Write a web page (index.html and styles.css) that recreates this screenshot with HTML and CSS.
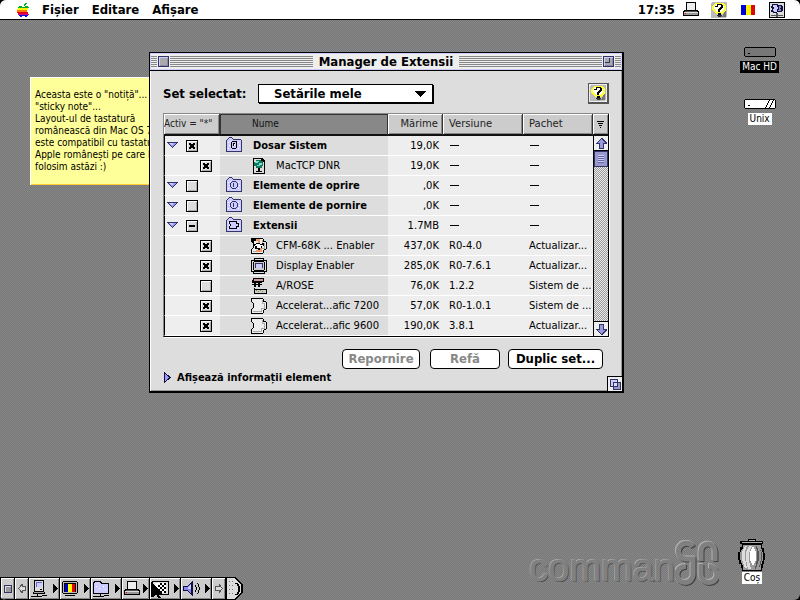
FILE: index.html
```html
<!DOCTYPE html>
<html lang="ro">
<head>
<meta charset="utf-8">
<title>Manager de Extensii</title>
<link rel="stylesheet" href="styles.css">
</head>
<body>
<svg class="defs" aria-hidden="true">
  <symbol id="fold" viewBox="0 0 16 15"><path d="M1 14V3L3 1H6L8 3H15V14Z" fill="#ccf"/><path d="M2 5h1v1h-1zM4 4h1v1h-1zM3 8h1v1h-1zM2 11h1v1h-1zM12 5h1v1h-1zM13 8h1v1h-1zM12 11h1v1h-1z" fill="#fff"/><path d="M0 3h1v11h-1zM1 2h1v1h-1zM2 1h1v1h-1zM3 0h3v1h-3zM6 1h1v1h-1zM7 2h8v1h-8zM15 3h1v11h-1zM0 14h16v1h-16z" fill="#336"/></symbol>
  <symbol id="tri" viewBox="0 0 11 7"><path d="M0 0H11L6 6H5Z" fill="#336"/><path d="M2 1H9L5.500 5Z" fill="#99f"/><path d="M2 1H6V3H4Z" fill="#ccf"/></symbol>
  <symbol id="piece" viewBox="0 0 16 16"><path d="M1 0H12V3H14V5H15V10H14V12H12V15H1V11H2V9H3V6H2V4H1Z" fill="#eee"/><path d="M0 0h12v1h-12zM0 1h1v3h-1zM1 4h1v1h-1zM2 5h1v5h-1zM1 10h1v1h-1zM0 11h1v5h-1zM1 15h11v1h-11zM12 1h1v3h-1zM13 3h2v1h-2zM15 4h1v7h-1zM13 11h2v1h-2zM12 12h1v3h-1z"/><path d="M11 2h1v3h2v6h-3v3h-9v-1h8v-3h3v-4h-2z" fill="#aaa"/></symbol>
  <symbol id="go" viewBox="0 0 5 9"><path d="M0 0H1V1H2V2H3V3H4V4H5V5H4V6H3V7H2V8H1V9H0Z"/></symbol>
  <symbol id="help" viewBox="0 0 16 16"><rect width="16" height="16" rx="2" fill="#bbb"/><path d="M1 15H15V1L12 14Z" fill="#777"/><path d="M4 1H12L15 4V8L11 12H5L1 8V4Z" fill="#ff3"/><path d="M5 2H11L13 5V7L10 10H6L3 7V4Z" fill="#fff"/><path d="M4 4h2v-2h5v1h1v3h-1v1h-1v1h-1v2h-2v-3h1v-1h1v-1h1v-2h-3v2h-3zM7 11h3v2h-3z"/><path d="M6 13h5v1h-1v1h-3v-1h-1z" fill="#333"/></symbol>
  <symbol id="printer" viewBox="0 0 16 15"><path d="M3 0H13V8H15V9H16V14H0V9H1V8H3Z"/><path d="M4 1H12V8H4Z" fill="#eee"/><path d="M2 9H14V10H2Z" fill="#555"/><path d="M1 10H15V11H1Z" fill="#ddd"/><path d="M1 11H15V13H1Z" fill="#999"/><path d="M2 11h1v1h-1z" fill="#f00"/></symbol>
  <symbol id="flag" viewBox="0 0 14 10"><path d="M0 0H5V10H0Z" fill="#0000d4"/><path d="M5 0H10V10H5Z" fill="#fcf305"/><path d="M10 0H14V10H10Z" fill="#dd0806"/></symbol>
  <symbol id="arrow" viewBox="0 0 11 11"><path d="M5 0H6L11 5V6H8V11H3V6H0V5Z" fill="#336"/><path d="M5 1H6L9 5H7V10H4V5H2Z" fill="#99d"/></symbol>
  <symbol id="hollow" viewBox="0 0 8 9"><path d="M4 0.500V2.500H7.500V6.500H4V8.500L0.500 4.500Z" fill="#ddd" stroke="#555"/></symbol>
</svg>

<header class="menubar">
  <nav class="menus">
    <button class="apple" aria-label="Apple"><svg width="12" height="14" viewBox="0 0 12 14"><path d="M6 3h1v-2h1v-1h2v1h-1v1h-1v1h-2zM2 3h3v1h3v-1h3v1h1v1H1v-1h1z" fill="#00b020"/><path d="M1 5H11V7H0V6H1Z" fill="#fcf305"/><path d="M0 7H10V9H0Z" fill="#ff7a00"/><path d="M0 9H11V11H1V10H0Z" fill="#e00020"/><path d="M1 11H12V12H11V13H2V12H1Z" fill="#d0108a"/><path d="M2 12H11V13H10V14H8V13H5V14H3V13H2Z" fill="#1010e0"/></svg></button>
    <button>Fișier</button><button>Editare</button><button>Afișare</button>
  </nav>
  <div class="status">
    <span>17:35</span>
    <svg class="printer" width="16" height="15"><use href="#printer"/></svg>
    <svg class="help" width="16" height="16"><use href="#help"/></svg>
    <svg class="flag" width="14" height="10"><use href="#flag"/></svg>
    <svg width="16" height="16" viewBox="0 0 16 16"><path d="M0 0H16V16H0Z"/><path d="M1 1H15V15H1Z" fill="#ddd"/><path d="M3 2H9V3H13V4H14V9H13V10H8V11H4V10H2V8H3V6H2V4H3Z" fill="#114"/><path d="M4 3H8V5H9V7H8V10H5V9H4V7H5V5H4Z" fill="#ccf"/><path d="M10 4H12V6H11V7H12V9H9V8H10Z" fill="#88c"/><path d="M2 13H7V11H9V13H14V14H9V15H7V14H2Z" fill="#555"/></svg>
  </div>
</header>

<main class="desktop">
  <div class="note">Aceasta este o "notiță"...<br>"sticky note"...<br>Layout-ul de tastatură<br>românească din Mac OS 7<br>este compatibil cu tastatu<br>Apple românești pe care l<br>folosim astăzi :)</div>

  <div class="drives">
    <figure class="drive selected"><svg width="32" height="10" viewBox="0 0 32 10"><path d="M1 0H31V1H32V9H31V10H1V9H0V1H1Z"/><path d="M1 1H31V9H1Z" fill="#777"/><path d="M4 6h2v1h-2z"/></svg><figcaption>Mac HD</figcaption></figure>
    <figure class="drive"><svg width="32" height="10" viewBox="0 0 32 10"><path d="M1 0H31V1H32V9H31V10H1V9H0V1H1Z"/><path d="M1 1H31V9H1Z" fill="#fff"/><path d="M4 6h2v1h-2zM21 8h1v-2h1v-2h1v-2h1v-1h1v1h-1v2h-1v2h-1v2h-1v1h-1zM25 8h1v-2h1v-2h1v-2h1v-1h1v1h-1v2h-1v2h-1v2h-1v1h-1z"/></svg><figcaption>Unix</figcaption></figure>
  </div>

  <section class="window" aria-label="Manager de Extensii">
    <header class="titlebar">
      <i class="stripes edge"></i><button class="box" aria-label="Închide"></button><i class="stripes"></i>
      <h1>Manager de Extensii</h1>
      <i class="stripes"></i><button class="box zoom" aria-label="Mărește"></button><i class="stripes edge"></i>
    </header>
    <div class="content">
      <div class="setrow">
        <label for="set">Set selectat:</label>
        <div class="pick"><select id="set"><option>Setările mele</option></select><svg width="12" height="6" viewBox="0 0 12 6"><path d="M0 0H12L6 6Z"/></svg></div>
        <button class="helpbtn" aria-label="Ajutor"><svg width="16" height="16"><use href="#help"/></svg></button>
      </div>
      <div class="list">
        <table>
          <colgroup><col class="c1"><col><col class="c3"><col class="c4"><col class="c5"></colgroup>
          <thead><tr><th class="on">Activ = "*"</th><th class="name sorted">Nume</th><th class="size">Mărime</th><th>Versiune</th><th>Pachet</th></tr></thead>
          <tbody>
            <tr class="group"><td><div class="cell"><svg width="11" height="7"><use href="#tri"/></svg><input type="checkbox" checked aria-label="Dosar Sistem"></div></td><td><div class="cell"><svg class="fold" width="17" height="15" viewBox="0 0 17 15"><use href="#fold" width="16" height="15"/><path d="M6 4h5v1h-5zM5 5h1v6h-1zM6 11h4v1h-4zM10 5h1v6h-1zM7 6h2v3h-2z"/><path d="M8 7h1v2h-1z" fill="#fff"/></svg>Dosar Sistem</div></td><td>19,0K</td><td class="dash"><i></i></td><td class="dash"><i></i></td></tr>
            <tr><td><div class="cell"><input type="checkbox" checked aria-label="MacTCP DNR"></div></td><td><div class="cell"><svg width="16" height="16" viewBox="0 0 16 16"><path d="M2 0H11L14 3V16H2Z"/><path d="M3 1H10V4H13V15H3Z" fill="#ddd"/><path d="M5 2H10V3H12V8H11V10H5V8H3V4H5Z" fill="#175"/><path d="M5 3H8V4H7V5H4V4H5ZM8 5H11V7H9V8H6V7H8Z" fill="#7dd"/><path d="M7 10h2v3h2v1h-6v-1h2z"/></svg>MacTCP DNR</div></td><td>19,0K</td><td class="dash"><i></i></td><td class="dash"><i></i></td></tr>
            <tr class="group"><td><div class="cell"><svg width="11" height="7"><use href="#tri"/></svg><input type="checkbox" aria-label="Elemente de oprire"></div></td><td><div class="cell"><svg class="fold" width="17" height="15" viewBox="0 0 17 15"><use href="#fold" width="16" height="15"/><path d="M6 4h4v1h-4zM5 5h1v1h-1zM10 5h1v1h-1zM4 6h1v4h-1zM11 6h1v4h-1zM5 10h1v1h-1zM10 10h1v1h-1zM6 11h4v1h-4zM7 6h1v4h-1z" fill="#336"/></svg>Elemente de oprire</div></td><td>,0K</td><td class="dash"><i></i></td><td class="dash"><i></i></td></tr>
            <tr class="group"><td><div class="cell"><svg width="11" height="7"><use href="#tri"/></svg><input type="checkbox" aria-label="Elemente de pornire"></div></td><td><div class="cell"><svg class="fold" width="17" height="15" viewBox="0 0 17 15"><use href="#fold" width="16" height="15"/><path d="M6 4h4v1h-4zM5 5h1v1h-1zM10 5h1v1h-1zM4 6h1v4h-1zM11 6h1v4h-1zM5 10h1v1h-1zM10 10h1v1h-1zM6 11h4v1h-4zM7 6h1v4h-1z" fill="#336"/></svg>Elemente de pornire</div></td><td>,0K</td><td class="dash"><i></i></td><td class="dash"><i></i></td></tr>
            <tr class="group"><td><div class="cell"><svg width="11" height="7"><use href="#tri"/></svg><input type="checkbox" class="mixed" aria-label="Extensii"></div></td><td><div class="cell"><svg class="fold" width="17" height="15" viewBox="0 0 17 15"><use href="#fold" width="16" height="15"/><path d="M3 4h8v2h2v4h-2v2h-8v-3h1v-2h-1zM4 5v2h1v2h-1v2h6v-2h2v-2h-2v-2z" fill-rule="evenodd"/></svg>Extensii</div></td><td>1.7MB</td><td class="dash"><i></i></td><td class="dash"><i></i></td></tr>
            <tr><td><div class="cell"><input type="checkbox" checked aria-label="CFM-68K Enabler"></div></td><td><div class="cell"><svg width="16" height="16"><use href="#piece"/><path d="M1 0H5V3H3V5H1ZM5 5h2v-1h2v2h2v-1h2v3h-2v3h-2v2h-2v-2h-3v-3h-2v-2h3z"/><path d="M5 6h4v1h3v1h-2v2h-4v-2h-2v-1h1z" fill="#fff"/><path d="M5 1H9V5H7V3H5ZM5 12H9V10H11V14H5Z" fill="#e96"/></svg>CFM-68K ... Enabler</div></td><td>437,0K</td><td>R0-4.0</td><td>Actualizar...</td></tr>
            <tr><td><div class="cell"><input type="checkbox" checked aria-label="Display Enabler"></div></td><td><div class="cell"><svg width="16" height="16" viewBox="0 0 16 16"><path d="M3 0H13V2H16V14H14V16H2V14H0V2H3Z"/><path d="M4 1H12V2H4ZM1 3H15V13H1ZM3 14H13V15H3Z" fill="#ddd"/><path d="M3 3H13V4H14V12H13V13H3V12H2V4H3Z"/><path d="M3 4H13V12H3Z" fill="#ccc"/><path d="M4 5H12V10H4Z" fill="#336"/><path d="M5 6H11V10H5Z" fill="#ccf"/></svg>Display Enabler</div></td><td>285,0K</td><td>R0-7.6.1</td><td>Actualizar...</td></tr>
            <tr><td><div class="cell"><input type="checkbox" aria-label="A/ROSE"></div></td><td><div class="cell"><svg width="16" height="16" viewBox="0 0 16 16"><path d="M2 0H13V4H11V5H1V2H2ZM3 5H5V9H3ZM7 5H9V9H7ZM1 6H11V7H1ZM4 9V11H16V16H3V10Z"/><path d="M3 1H12V3H3Z" fill="#c99"/><path d="M4 12H15V15H4Z" fill="#ccc"/><path d="M5 12h1v1h-1zM7 13h1v1h-1zM9 12h1v1h-1zM11 13h1v1h-1z" fill="#883"/></svg>A/ROSE</div></td><td>76,0K</td><td>1.2.2</td><td>Sistem de ...</td></tr>
            <tr><td><div class="cell"><input type="checkbox" checked aria-label="Accelerator grafic 7200"></div></td><td><div class="cell"><svg width="16" height="16"><use href="#piece"/></svg>Accelerat...afic 7200</div></td><td>57,0K</td><td>R0-1.0.1</td><td>Sistem de ...</td></tr>
            <tr><td><div class="cell"><input type="checkbox" checked aria-label="Accelerator grafic 9600"></div></td><td><div class="cell"><svg width="16" height="16"><use href="#piece"/></svg>Accelerat...afic 9600</div></td><td>190,0K</td><td>3.8.1</td><td>Actualizar...</td></tr>
          </tbody>
        </table>
        <div class="side">
          <button class="order" aria-label="Ordine"><svg width="7" height="7" viewBox="0 0 7 7"><path d="M0 0h7v1h-7zM1 2h5v1h-5zM2 4h3v1h-3zM3 6h1v1h-1z"/></svg></button>
          <div class="scroll">
            <button aria-label="Sus"><svg width="11" height="11"><use href="#arrow"/></svg></button>
            <i class="thumb"></i>
            <button class="down" aria-label="Jos"><svg width="11" height="11"><use href="#arrow"/></svg></button>
          </div>
        </div>
      </div>
      <div class="actions"><button class="b1" disabled>Repornire</button><button class="b2" disabled>Refă</button><button class="b3">Duplic set...</button></div>
      <button class="more"><svg width="7" height="11" viewBox="0 0 7 11"><path d="M0 0L7 5V6L0 11Z" fill="#113"/><path d="M1 2L5 5V6L1 9Z" fill="#99f"/></svg>Afișează informații element</button>
    </div>
    <i class="grow"><svg width="11" height="11" viewBox="0 0 11 11"><path d="M0 0H8V3H11V11H3V8H0Z" fill="#336"/><path d="M1 1H7V7H1Z" fill="#ccf"/><path d="M4 4H10V10H4Z" fill="#99c"/><path d="M3 3H8V8H3Z" fill="#336"/><path d="M4 4H7V7H4Z" fill="#ddf"/></svg></i>
  </section>

  <div class="brand"><span>comman</span><svg width="44" height="46" viewBox="0 0 44 46">
    <defs><g id="mark" fill="none" stroke-width="5"><path d="M18 6.500A8 8 0 1 0 10 19H18V34A8 8 0 1 1 11 26.500"/><path d="M26 21V11A7 7 0 0 1 40 11V21"/><path d="M26 24V34A8 8 0 1 0 34 26.500"/></g></defs>
    <use href="#mark" x="1" y="1" stroke="#444"/><use href="#mark" x="-1" y="-1" stroke="#b0b0b0"/><use href="#mark" stroke="#808080"/></svg></div>

  <figure class="trash"><svg width="28" height="33" viewBox="0 0 28 33"><path d="M10 0H18V2H25V5H24V9H26V14H27V21H26V25H25V29H24V32H4V29H3V25H1V21H0V13H2V8H4V5H2V2H10Z"/><path d="M11 1H17V2H11ZM4 3H24V4H4Z" fill="#aaa"/><path d="M5 6H23V9L25 14V20L23 27V31H5V27L2 20V14L5 9Z" fill="#999"/><path d="M7 7H9L7 13V20L9 29H7L4 20V13ZM11 7H14L11 14V22L13 30H10L8 20V13Z" fill="#ddd"/><path d="M15 7L18 13V21L15 27L12 21V13Z" fill="#fff"/><path d="M18 7H19L21 13V21L18 30H17L19 20V13ZM21 8L24 14V20L22 28H21L23 20V13Z" fill="#555"/></svg><figcaption>Coș</figcaption></figure>

  <div class="strip">
    <button class="s-end" aria-label="Restrânge"><svg width="8" height="8" viewBox="0 0 8 8"><path d="M0 0H8V8H0Z" fill="#336"/><path d="M1 1H7V7H1Z" fill="#ddd"/><path d="M2 2H7V7H2Z" fill="#999"/></svg></button>
    <button class="s-arr" aria-label="Înapoi"><svg width="8" height="9"><use href="#hollow"/></svg></button>
    <button class="s-mod" aria-label="Partajare"><svg width="17" height="17" viewBox="0 0 17 17"><path d="M3 0H13V12H14V14H2V12H3Z"/><path d="M4 1H12V11H4Z" fill="#ddd"/><path d="M5 2H11V7H5Z" fill="#66c"/><path d="M6 3H11V7H6Z" fill="#ccf"/><path d="M3 12H13V13H3Z" fill="#aaa"/><path d="M9 9h2v1h-2zM0 16h6v-2h1v2h4v-1h5v1h-5v1H0z"/></svg><svg width="5" height="9"><use href="#go"/></svg></button>
    <button class="s-mod" aria-label="Culori"><svg width="17" height="15" viewBox="0 0 17 15"><path d="M1 0H15V1H16V12H15V13H1V12H0V1H1Z"/><path d="M1 1H15V12H1Z" fill="#bbb"/><path d="M2 2H14V11H2Z"/><path d="M3 3H6V11H3Z" fill="#00c"/><path d="M6 3H10V11H6Z" fill="#ff0"/><path d="M10 3H13V11H10Z" fill="#e00"/><path d="M3 14h10v1h-10z"/></svg><svg width="5" height="9"><use href="#go"/></svg></button>
    <button class="s-mod" aria-label="Dosare"><svg width="17" height="17" viewBox="0 0 17 17"><path d="M1 1H7L9 3H16V14H0V2Z"/><path d="M1 3H2V2H6L8 4H15V13H1Z" fill="#ccf"/><path d="M3 6h1v1h-1zM6 8h1v1h-1zM10 6h1v1h-1zM12 9h1v1h-1z" fill="#fff"/><path d="M0 16h7v-2h1v2h3v-1h5v1h-5v1H0z"/></svg><svg width="5" height="9"><use href="#go"/></svg></button>
    <button class="s-mod s-slim" aria-label="Imprimantă"><svg width="16" height="15"><use href="#printer"/></svg><svg width="5" height="9"><use href="#go"/></svg></button>
    <button class="s-mod" aria-label="Rezoluție"><svg width="17" height="15" viewBox="0 0 17 15"><path d="M0 0H17V14H0Z"/><path d="M1 1H16V13H1Z" fill="#ddd"/><path d="M3 2h11v10h-11z" fill="#fff"/><path d="M8 2h2v2h-2zM12 2h2v2h-2zM10 4h2v2h-2zM6 4h2v2h-2zM8 6h2v2h-2zM12 6h2v2h-2zM10 8h2v2h-2zM6 8h2v2h-2zM4 10h2v2h-2zM8 10h2v2h-2zM12 10h2v2h-2z"/></svg><svg width="5" height="9"><use href="#go"/></svg></button>
    <button class="s-mod" aria-label="Sunet"><svg width="17" height="15" viewBox="0 0 17 15"><path d="M0 5H4L9 0H10V15H9L4 10H0Z" fill="#114"/><path d="M1 6H4L8 2V13L4 9H1Z" fill="#88e"/><path d="M5 6L8 4V8H5Z" fill="#ccf"/><path d="M12 4h1v2h1v3h-1v2h-1v-2h1v-3h-1zM14 2h1v1h1v3h1v3h-1v3h-1v1h-1v-1h1v-3h1v-3h-1v-3h-1z"/></svg><svg width="5" height="9"><use href="#go"/></svg></button>
    <button class="s-arr" aria-label="Înainte"><svg class="flip" width="8" height="9"><use href="#hollow"/></svg></button>
    <svg class="tab" width="17" height="23" viewBox="0 0 17 23"><path d="M0 0H10L17 8V15L10 23H0Z"/><path d="M1 1H9L15 8V15L9 22H1Z" fill="#ddd"/><path d="M3 4h1v1h-1zM6 4h1v1h-1zM3 8h1v1h-1zM6 8h1v1h-1zM3 12h1v1h-1zM6 12h1v1h-1zM3 16h1v1h-1zM6 16h1v1h-1z" fill="#777"/><path d="M9 6h3v1h1v2h1v6h-1v2h-1v1h-3v-1h2v-2h1v-6h-1v-2h-2z"/></svg>
    <svg class="cursor" width="12" height="17" viewBox="0 0 12 17"><path d="M0 0L11 11V12H7L10 16H7L5 12L2 15H0Z"/></svg>
  </div>
</main>
</body>
</html>
```
FILE: styles.css
```css
* { box-sizing: border-box; }
html { background: #000; height: 100%; }
body {
  margin: 0;
  min-height: 100%;
  display: flex;
  flex-direction: column;
  overflow: hidden;
  border-radius: 6px;
  background: repeating-conic-gradient(#777 0 25%, #888 0 50%) 0 0 / 2px 2px;
  font: 10px/12px "DejaVu Sans Condensed", "DejaVu Sans", sans-serif;
  color: #000;
}
button, select { font: inherit; color: inherit; margin: 0; padding: 0; border: 0; background: none; }
svg { display: block; flex: none; shape-rendering: crispEdges; }
figure { margin: 0; }
.defs { position: absolute; width: 0; height: 0; }

.menubar {
  display: flex;
  justify-content: space-between;
  height: 20px;
  padding: 0 15px 0 17px;
  background: #fff;
  border-bottom: 1px solid #000;
  font-weight: bold;
  font-size: 13px;
}
.menus, .status { display: flex; align-items: center; }
.menus { gap: 13px; }
.status .printer { margin: 0 12px 0 8px; }
.status .flag { margin: 0 14px; }

.desktop { position: relative; flex: 1; }
.note {
  position: absolute;
  left: 30px;
  top: 57px;
  width: 160px;
  height: 108px;
  padding: 11px 4px;
  white-space: nowrap;
  background: #ff9;
  border: solid #fff;
  border-width: 1px 0 0 1px;
  box-shadow: inset 0 -1px #fc3;
}
.drives {
  position: absolute;
  top: 27px;
  right: 21px;
  display: grid;
  gap: 26px;
}
.drive { display: grid; justify-items: center; gap: 4px; }
figcaption { background: #fff; padding: 0 2px; }
.selected figcaption { background: #000; color: #fff; }

.window {
  position: absolute;
  left: 149px;
  right: 176px;
  top: 32px;
  background: #ddd;
  border: 1px solid #000;
  border-width: 1px 2px 2px 1px;
  box-shadow: inset 1px 1px #fff, inset -1px -1px #999;
}
.titlebar {
  display: flex;
  align-items: center;
  gap: 1px;
  height: 18px;
  padding: 0 1px;
  background: #eee;
  border-bottom: 1px solid #000;
  box-shadow: inset 0 0 0 1px #ccf;
}
h1 { margin: 0 5px; font-size: 13px; line-height: 14px; }
.stripes { flex: 1; height: 11px; background: repeating-linear-gradient(#888 0 1px, #eee 1px 2px); }
.stripes.edge { flex: 0 0 6px; }
.box {
  width: 11px;
  height: 11px;
  border: 1px solid #336;
  background: #aaa;
  box-shadow: inset 1px 1px #ccf, inset -1px -1px #88a;
}
.zoom { background: linear-gradient(#336, #336) 0 5px / 6px 1px no-repeat, linear-gradient(#336, #336) 5px 0 / 1px 6px no-repeat, #aaa; }

.content { padding: 12px 13px 5px; }
.setrow { display: flex; align-items: center; font-size: 13px; font-weight: bold; height: 21px; }
.setrow label { width: 95px; }
.pick { position: relative; width: 175px; }
.pick select {
  appearance: none;
  display: block;
  width: 100%;
  height: 19px;
  padding-left: 15px;
  background: #fff;
  border: 1px solid #000;
  box-shadow: 1px 1px #000;
}
.pick svg { position: absolute; right: 7px; top: 7px; pointer-events: none; }
.helpbtn {
  margin-left: auto;
  padding: 1px;
  border: 1px solid #555;
  border-width: 1px 2px 2px 1px;
  background: #eee;
}

.list {
  display: flex;
  margin-top: 9px;
  border: solid #888;
  border-width: 1px 0 0 1px;
  border-bottom: 1px solid #000;
  box-shadow: 1px 1px #fff;
}
table {
  flex: 1;
  width: 0;
  table-layout: fixed;
  border-collapse: separate;
  border-spacing: 0;
  white-space: nowrap;
  font-family: "DejaVu Sans", sans-serif;
}
.c1 { width: 56px; }
.c3 { width: 55px; }
.c4 { width: 80px; }
.c5 { width: 70px; }
th, td { padding: 0 0 0 6px; overflow: hidden; text-align: left; }
th {
  height: 22px;
  font-weight: normal;
  color: #222;
  background: #ccc;
  border-bottom: 2px solid #111;
  border-right: 1px solid #333;
  box-shadow: inset 1px 1px #fff, inset -1px -1px #888;
}
th.on { padding: 0; font-family: "DejaVu Sans Condensed", sans-serif; }
th.name { padding-left: 32px; font-family: "DejaVu Sans Condensed", sans-serif; }
th.sorted { background: #888; box-shadow: inset 1px 1px #333; color: #111; }
th.size { text-align: right; padding-right: 4px; }
td { height: 20px; background: #eee; border-bottom: 1px solid #fff; }
td:nth-child(1) { border-left: 1px solid #000; padding-left: 2px; }
td:nth-child(2) { background: #ddd; padding-left: 31px; }
td:nth-child(3) { text-align: right; padding-right: 4px; }
.cell { display: flex; align-items: center; gap: 9px; }
td:nth-child(1) .cell { gap: 8px; }
tr.group td:nth-child(2) {
  padding-left: 6px;
  font-family: "DejaVu Sans Condensed", sans-serif;
  font-size: 11px;
  font-weight: bold;
}
tr:not(.group) td:nth-child(1) { padding-left: 35px; }
.fold { margin: 0 1px 3px 0; }
.dash i { display: block; width: 9px; height: 1px; margin-left: 1px; background: #000; }
input {
  appearance: none;
  flex: none;
  width: 12px;
  height: 12px;
  margin: 0;
  border: 1px solid #000;
  background: #ddd;
  box-shadow: inset 1px 1px #fff, inset -1px -1px #aaa;
}
input:checked {
  background:
    linear-gradient(45deg, transparent 41%, #000 41% 59%, transparent 59%) 2px 2px / 6px 6px no-repeat,
    linear-gradient(-45deg, transparent 41%, #000 41% 59%, transparent 59%) 2px 2px / 6px 6px no-repeat,
    #ddd;
}
.mixed { background: linear-gradient(#000, #000) 2px 4px / 6px 2px no-repeat, #ddd; }

.side { display: flex; flex-direction: column; width: 16px; border-right: 1px solid #000; }
.order {
  display: grid;
  place-items: center;
  height: 22px;
  background: #ccc;
  border-bottom: 2px solid #111;
  box-shadow: inset 1px 1px #fff, inset -1px -1px #888;
}
.scroll {
  flex: 1;
  display: flex;
  flex-direction: column;
  border-left: 1px solid #000;
  background: repeating-conic-gradient(#999 0 25%, #eee 0 50%) 0 0 / 2px 2px;
}
.scroll button {
  display: grid;
  place-items: center;
  height: 15px;
  background: #eee;
  border-bottom: 1px solid #000;
}
.scroll .down { margin-top: auto; border-bottom: 0; border-top: 1px solid #000; }
.down svg { transform: rotate(180deg); }
.thumb {
  height: 16px;
  border: 1px solid #336;
  background: repeating-linear-gradient(#ccf 0 1px, #669 1px 2px) center / 6px 8px no-repeat, #99c;
}

.actions { display: flex; justify-content: flex-end; margin: 12px 6px 0 0; font-size: 13px; font-weight: bold; }
.actions button { height: 20px; background: #fff; border: 1px solid #000; border-radius: 4px; }
.actions button:disabled { color: #888; }
.b1 { width: 78px; margin-right: 10px; }
.b2 { width: 70px; margin-right: 8px; }
.b3 { width: 95px; }
.more { display: flex; align-items: center; gap: 6px; height: 17px; padding-left: 1px; font-size: 11px; font-weight: bold; }
.grow {
  position: absolute;
  right: 0;
  bottom: 0;
  width: 15px;
  height: 15px;
  display: grid;
  place-items: center;
  background: #eee;
  border: solid #000;
  border-width: 1px 0 0 1px;
}

.brand {
  position: absolute;
  right: 81px;
  bottom: 14px;
  display: flex;
  align-items: flex-end;
  color: #808080;
  font: 38px/36px "Liberation Sans", sans-serif;
  -webkit-text-stroke: 1px #808080;
  text-shadow: -1px -1px #b0b0b0, 1px 1px #444;
}
.brand svg { shape-rendering: auto; }
.trash { position: absolute; right: 34px; bottom: 16px; display: grid; justify-items: center; }

.strip { position: absolute; left: 0; bottom: 0; display: flex; height: 23px; }
.strip button {
  display: flex;
  align-items: center;
  justify-content: center;
  gap: 5px;
  background: #ccc;
  border: solid #000;
  border-width: 1px 1px 1px 0;
  box-shadow: inset 1px 1px #fff, inset -1px -1px #888;
}
.strip .s-end { width: 15px; border-left-width: 1px; }
.strip .s-arr { width: 14px; }
.strip .s-mod { width: 31px; }
.strip .s-slim { width: 28px; gap: 3px; }
.flip { transform: rotate(180deg); }
.cursor { position: absolute; left: 151px; top: 5px; }
```
